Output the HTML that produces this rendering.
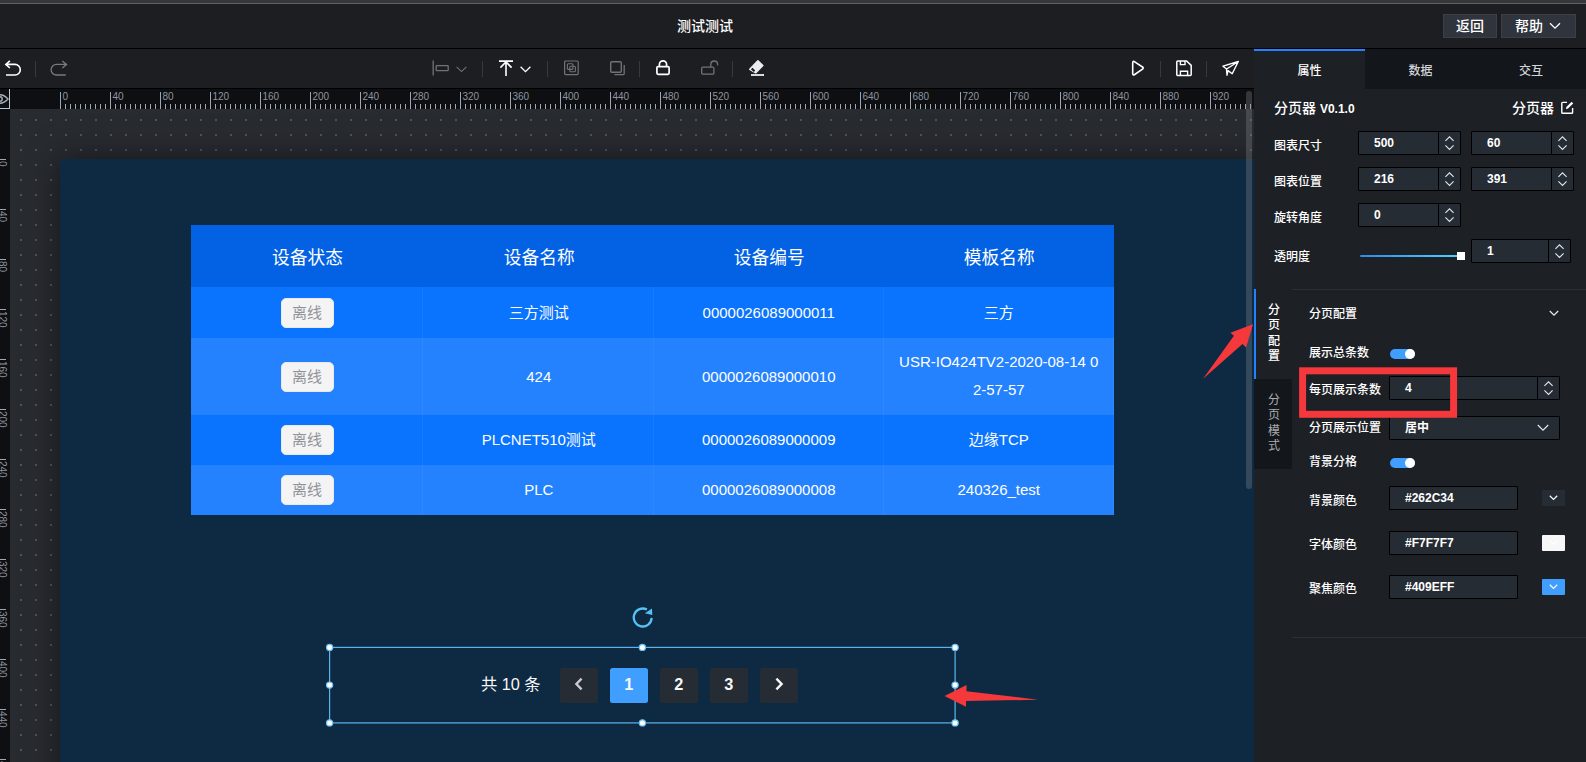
<!DOCTYPE html>
<html lang="zh-CN"><head><meta charset="utf-8"><title>测试测试</title>
<style>
*{box-sizing:border-box;margin:0;padding:0}
html,body{width:1586px;height:762px;overflow:hidden;background:#1e1f22}
body{position:relative;font-family:"Liberation Sans","Noto Sans CJK SC",sans-serif;font-size:12px;color:#fff}
.abs,body>div,body>svg{position:absolute}
i{font-style:normal}
/* top strip */
#strip{left:0;top:0;width:1586px;height:3px;background:#36373b}
#stripline{left:0;top:3px;width:1586px;height:1px;background:#616266}
/* header */
#header{left:0;top:4px;width:1586px;height:44px;background:#1d1e21}
#hline{left:0;top:48px;width:1586px;height:1px;background:#000}
#title{font-weight:500;position:absolute;left:605px;width:200px;top:11px;height:22px;line-height:22px;text-align:center;font-size:14px;color:#fff}
.hbtn{position:absolute;top:10px;height:24px;line-height:22px;border:1px solid #3b3f48;background:#2f343d;font-size:14px;color:#fff;text-align:center;font-weight:500}
/* toolbar */
#toolbar{left:0;top:49px;width:1254px;height:39px;background:#1d1e21}
#toolbar svg{position:absolute;overflow:visible}
.sep{position:absolute;top:12px;width:1px;height:16px;background:#38393e}
/* ruler */
#rulerT{left:0;top:88px;width:1254px;height:21px;background:#0e0f12;overflow:hidden;box-shadow:inset 0 1px 0 #000}
#rulerT .minor{position:absolute;left:60px;right:0;bottom:0;height:5px;background:repeating-linear-gradient(90deg,#a0a7b1 0,#a0a7b1 1px,transparent 1px,transparent 5px)}
.tk{position:absolute;top:4px;width:1px;height:17px;background:#a0a7b1}
.tl{position:absolute;top:3px;font-size:10px;line-height:12px;color:#8d949e}
#rulerL{left:0;top:109px;width:10px;height:653px;background:#0e0f12;overflow:hidden}
.lk{position:absolute;left:0;width:6px;height:1px;background:#a0a7b1}
.ll{position:absolute;left:8px;font-size:10px;line-height:12px;color:#8d949e;transform-origin:0 0;transform:rotate(90deg);white-space:nowrap}
#eye{left:0;top:89px;width:10px;height:20px;background:#0e0f12;border-right:1px solid #bcc5d0;border-bottom:1px solid #bcc5d0;overflow:hidden}
/* canvas */
#stage{left:10px;top:109px;width:1244px;height:653px;background-color:#282b30;overflow:hidden}
#dots{position:absolute;left:0;top:0;right:0;bottom:0;background-image:radial-gradient(circle at 1px 1px,#4b5559 0.9px,transparent 1.3px);background-size:15px 15px;background-position:10px 10px}
#screen{position:absolute;left:50px;top:50px;width:1300px;height:700px;background:#0e2a43;box-shadow:0 0 30px rgba(0,0,0,.5)}
/* right panel */
#panel{left:1254px;top:49px;width:332px;height:713px;background:#1d2025}
/* table (screen coords: page - (60,159)) */
#tbl{position:absolute;left:131px;top:66px;width:923px;height:290px;background:#0a74ff;font-size:15px;color:#fff}
#tbl .r{position:absolute;left:0;width:923px}
#tbl .c{position:absolute;top:0;bottom:0;width:231px;display:flex;align-items:center;justify-content:center;text-align:center;line-height:28px}
#tbl .r:not(.h) .c{border-right:1px solid rgba(255,255,255,.045)}
#tbl .c1{left:1px}#tbl .c2{left:232px;padding-left:1.5px}#tbl .c3{left:462px;padding-left:1.5px}#tbl .c4{left:692px;padding-left:1.5px}
#tbl .h{top:0;height:62px;background:#0262e3;font-size:17.7px}
#tbl .h .c{padding-top:3px}
.tag{display:inline-block;width:53px;height:30px;line-height:28px;border:1px solid #e9e9eb;border-radius:5px;background:#f4f4f5;color:#909399;font-size:15px;text-align:center}
/* pager */
#pager{position:absolute;left:270px;top:488px;width:626px;height:76px;font-size:16.25px;color:#f7f7f7}
#pager span{position:absolute;top:21px;height:35px;line-height:33.5px;white-space:nowrap}
#pager .pb{width:37.5px;border-radius:2.5px;background:#262c34;font-weight:bold;text-align:center}
#pager .on{background:#409eff}
/* panel internals (panel origin 1254,49) */
#panel .tabs{position:absolute;left:0;top:0;width:332px;height:40px;background:#13161b}
#panel .tab{position:absolute;top:0;height:40px;line-height:45px;text-align:center;font-size:12px;color:#d2d4d8;font-weight:500}
#panel .tab.on{background:#1d2025;border-top:2px solid #2681ff;line-height:41px;color:#fff;font-weight:500}
.lb{position:absolute;left:20px;height:16px;line-height:16px;font-size:12px;color:#fff;white-space:nowrap;font-weight:500;margin-top:1px}
.lb2{left:55px}
.inp{position:absolute;height:24px;border:1px solid #000;background:#262c34;border-radius:1px;font-size:12px;line-height:22px;color:#fff;padding-left:15px;font-weight:bold}
.inp .sp{position:absolute;right:0;top:0;bottom:0;width:22px;border-left:1px solid #000}
.inp .sp svg{position:absolute;left:5px;top:3px}
.hr{position:absolute;left:38px;right:0;height:1px;background:#2d2f34}
.vt{position:absolute;left:0;width:38px;font-size:12px;line-height:15.3px;text-align:center}
.vt i{display:block}
.sw{position:absolute;left:136px;width:25px;height:10px;border-radius:5px;background:#409eff}
.sw:after{content:"";position:absolute;right:0;top:0;width:10px;height:10px;border-radius:50%;background:#fff}
.cs{position:absolute;left:288px;width:23px;height:16px;border-radius:1px}
.cs svg{position:absolute;left:7px;top:5px}
#vscroll{left:1246px;top:91px;width:6px;height:398px;border-radius:3px;background:rgba(144,147,153,.3)}

</style></head>
<body>
<div id="strip"></div><div id="stripline"></div>
<div id="header">
  <div id="title">测试测试</div>
  <div class="hbtn" style="left:1443px;width:54px">返回</div>
  <div class="hbtn" style="left:1501px;width:75px;padding-right:19px">帮助<svg style="position:absolute;left:47px;top:7px" width="12" height="8" viewBox="0 0 12 8"><path d="M1 1.2 L6 6.2 L11 1.2" fill="none" stroke="#fff" stroke-width="1.3"/></svg></div>
</div>
<div id="hline"></div>

<div id="toolbar">
  <!-- undo -->
  <svg style="left:4px;top:11px" width="18" height="17" viewBox="0 0 18 17"><path d="M5.9 0.8 L1.8 4.4 L5.9 8 M2 4.4 H11 A5.3 5.3 0 0 1 11 15 H2" fill="none" stroke="#fff" stroke-width="1.6"/></svg>
  <i class="sep" style="left:35px"></i>
  <!-- redo -->
  <svg style="left:50px;top:11px" width="18" height="17" viewBox="0 0 18 17"><path d="M12.3 0.9 L16.6 4.4 L12.3 7.9 M16.4 4.4 H6.4 A5.3 5.3 0 0 0 6.4 15 H15.8" fill="none" stroke="#777a80" stroke-width="1.3"/></svg>
  <!-- align -->
  <svg style="left:432px;top:11px" width="18" height="16" viewBox="0 0 18 16"><path d="M1.2 0.5 V15.5" fill="none" stroke="#6f7379" stroke-width="1.3"/><rect x="4.2" y="5.6" width="12" height="5" rx="0.6" fill="none" stroke="#6f7379" stroke-width="1.3"/></svg>
  <svg style="left:456px;top:17px" width="11" height="7" viewBox="0 0 11 7"><path d="M0.6 0.8 L5.5 5.6 L10.4 0.8" fill="none" stroke="#6f7379" stroke-width="1.1"/></svg>
  <i class="sep" style="left:482px"></i>
  <!-- to top -->
  <svg style="left:499px;top:11px" width="14" height="16" viewBox="0 0 14 16"><path d="M0 1.1 H14 M7 16 V2.4 M1.4 7.6 L7 2 L12.6 7.6" fill="none" stroke="#fff" stroke-width="1.6"/></svg>
  <svg style="left:520px;top:17px" width="11" height="7" viewBox="0 0 11 7"><path d="M0.6 0.8 L5.5 5.6 L10.4 0.8" fill="none" stroke="#fff" stroke-width="1.3"/></svg>
  <i class="sep" style="left:547px"></i>
  <!-- group -->
  <svg style="left:564px;top:12px" width="15" height="15" viewBox="0 0.6 15 15"><rect x="0.6" y="0.6" width="13.6" height="13.6" rx="1" fill="none" stroke="#6f7379" stroke-width="1.2"/><rect x="3.4" y="3.4" width="5.6" height="5.6" rx="1" fill="none" stroke="#6f7379" stroke-width="1.1"/><rect x="5.8" y="5.8" width="5.6" height="5.6" rx="1" fill="none" stroke="#6f7379" stroke-width="1.1"/></svg>
  <!-- ungroup -->
  <svg style="left:610px;top:12px" width="16" height="15" viewBox="0 0 16 15"><rect x="0.7" y="0.7" width="10.6" height="10.6" rx="1.2" fill="none" stroke="#6f7379" stroke-width="1.4"/><path d="M14.2 4 V12.4 A1.2 1.2 0 0 1 13 13.6 H4.4" fill="none" stroke="#6f7379" stroke-width="1.3"/></svg>
  <i class="sep" style="left:639px"></i>
  <!-- lock -->
  <svg style="left:656px;top:11px" width="14" height="16" viewBox="0 0 14 16"><rect x="0.9" y="6.6" width="12.2" height="7.7" rx="1.2" fill="none" stroke="#fff" stroke-width="1.7"/><path d="M3.4 6.4 V4.4 A3.6 3.6 0 0 1 10.6 4.4 V6.4" fill="none" stroke="#fff" stroke-width="1.7"/></svg>
  <!-- unlock -->
  <svg style="left:701px;top:11px" width="18" height="16" viewBox="0 0 18 16"><rect x="0.7" y="7.2" width="12.2" height="7" rx="1.2" fill="none" stroke="#6f7379" stroke-width="1.3"/><path d="M9.8 7 V4.4 A3.4 3.4 0 0 1 16.6 4.4 V5.6" fill="none" stroke="#6f7379" stroke-width="1.3"/></svg>
  <i class="sep" style="left:732px"></i>
  <!-- eraser -->
  <svg style="left:748px;top:11px" width="17" height="17" viewBox="0 0 17 17"><path d="M9.9 0.9 L14.8 5.5 L7.8 12.8 L1.8 9.3 Z" fill="#ececee" stroke="#ececee" stroke-width="1.6" stroke-linejoin="round"/><path d="M2.9 9.2 L4.6 7.7 L7.2 10.4 L5.9 12.1 Z" fill="#1d1e21"/><path d="M3 15 H16" stroke="#ececee" stroke-width="1.8"/></svg>
  <!-- play -->
  <svg style="left:1131px;top:11px" width="14" height="17" viewBox="0 0 14 17"><path d="M1.7 2.9 Q1.7 0.6 3.7 1.8 L11.5 7 Q12.9 8.1 11.5 9.2 L3.7 14.5 Q1.7 15.7 1.7 13.4 Z" fill="none" stroke="#fff" stroke-width="1.6" stroke-linejoin="round"/></svg>
  <i class="sep" style="left:1160px"></i>
  <!-- save -->
  <svg style="left:1176px;top:11px" width="16" height="17" viewBox="0 0 16 17"><path d="M1.8 0.9 H10.6 L15.2 5.4 V14.6 A1 1 0 0 1 14.2 15.6 H1.8 A1 1 0 0 1 0.8 14.6 V1.9 A1 1 0 0 1 1.8 0.9 Z" fill="none" stroke="#fff" stroke-width="1.5"/><path d="M4.4 1 V4.6 H9 V1 M4.4 15.4 V11.2 H11.6 V15.4" fill="none" stroke="#fff" stroke-width="1.4"/></svg>
  <i class="sep" style="left:1206px"></i>
  <!-- send -->
  <svg style="left:1222px;top:11px" width="18" height="17" viewBox="0 0 18 17"><path d="M16.3 1.5 L1 6.2 L4.5 9 L5 15.2 L6 10.6 L10.2 13.7 Z M4.7 9 L16.3 1.5" fill="none" stroke="#fff" stroke-width="1.4" stroke-linejoin="round" stroke-linecap="round"/></svg>
</div>

<div id="stage">
  <div id="dots"></div>
  <div id="screen">
    <div id="tbl">
      <div class="r h"><div class="c c1">设备状态</div><div class="c c2">设备名称</div><div class="c c3">设备编号</div><div class="c c4">模板名称</div></div>
      <div class="r" style="top:62px;height:51px;background:#0a74ff"><div class="c c1"><span class="tag">离线</span></div><div class="c c2">三方测试</div><div class="c c3">0000026089000011</div><div class="c c4">三方</div></div>
      <div class="r" style="top:113px;height:77px;background:#2582ff"><div class="c c1"><span class="tag">离线</span></div><div class="c c2">424</div><div class="c c3">0000026089000010</div><div class="c c4" style="line-height:28px;padding-bottom:1px">USR-IO424TV2-2020-08-14 0<br>2-57-57</div></div>
      <div class="r" style="top:190px;height:50px;background:#0a74ff"><div class="c c1"><span class="tag">离线</span></div><div class="c c2">PLCNET510测试</div><div class="c c3">0000026089000009</div><div class="c c4">边缘TCP</div></div>
      <div class="r" style="top:240px;height:50px;background:#2582ff"><div class="c c1"><span class="tag">离线</span></div><div class="c c2">PLC</div><div class="c c3">0000026089000008</div><div class="c c4">240326_test</div></div>
    </div>
    <svg style="position:absolute;left:572px;top:448px" width="22" height="22" viewBox="0 0 22 22"><path d="M19.65 10.9 A8.95 8.95 0 1 1 14.9 2.6" fill="none" stroke="#57c1f6" stroke-width="2.3"/><path d="M12.9 6.2 L20 1.5 L20.3 7.9 Z" fill="#57c1f6"/></svg>
    <div id="pager">
      <span style="left:151px">共 10 条</span>
      <span class="pb" style="left:230px"><svg width="12" height="16" viewBox="0 0 12 16" style="vertical-align:-2px"><path d="M8.6 2.6 L3.4 8 L8.6 13.4" fill="none" stroke="#c9cbcf" stroke-width="2.4"/></svg></span>
      <span class="pb on" style="left:280px">1</span>
      <span class="pb" style="left:330px">2</span>
      <span class="pb" style="left:380px">3</span>
      <span class="pb" style="left:430px"><svg width="12" height="16" viewBox="0 0 12 16" style="vertical-align:-2px"><path d="M3.4 2.6 L8.6 8 L3.4 13.4" fill="none" stroke="#f7f7f7" stroke-width="2.4"/></svg></span>
    </div>
    <svg id="sel" style="position:absolute;left:0;top:0;overflow:visible" width="1000" height="600"><rect x="269.6" y="488.4" width="625.5" height="75.5" fill="none" stroke="#5cb2ee" stroke-width="1.2"/><g fill="#fff" stroke="#6cc0f6" stroke-width="1.2"><circle cx="269.6" cy="488.4" r="3.1"/><circle cx="582.4" cy="488.4" r="3.1"/><circle cx="895.1" cy="488.4" r="3.1"/><circle cx="269.6" cy="526.1" r="3.1"/><circle cx="895.1" cy="526.1" r="3.1"/><circle cx="269.6" cy="563.9" r="3.1"/><circle cx="582.4" cy="563.9" r="3.1"/><circle cx="895.1" cy="563.9" r="3.1"/></g></svg>
<!--SCREEN-->
  </div>
</div>
<div id="rulerT"><i class="minor"></i><i class="tk" style="left:60px"></i><span class="tl" style="left:62.5px">0</span><i class="tk" style="left:110px"></i><span class="tl" style="left:112.5px">40</span><i class="tk" style="left:160px"></i><span class="tl" style="left:162.5px">80</span><i class="tk" style="left:210px"></i><span class="tl" style="left:212.5px">120</span><i class="tk" style="left:260px"></i><span class="tl" style="left:262.5px">160</span><i class="tk" style="left:310px"></i><span class="tl" style="left:312.5px">200</span><i class="tk" style="left:360px"></i><span class="tl" style="left:362.5px">240</span><i class="tk" style="left:410px"></i><span class="tl" style="left:412.5px">280</span><i class="tk" style="left:460px"></i><span class="tl" style="left:462.5px">320</span><i class="tk" style="left:510px"></i><span class="tl" style="left:512.5px">360</span><i class="tk" style="left:560px"></i><span class="tl" style="left:562.5px">400</span><i class="tk" style="left:610px"></i><span class="tl" style="left:612.5px">440</span><i class="tk" style="left:660px"></i><span class="tl" style="left:662.5px">480</span><i class="tk" style="left:710px"></i><span class="tl" style="left:712.5px">520</span><i class="tk" style="left:760px"></i><span class="tl" style="left:762.5px">560</span><i class="tk" style="left:810px"></i><span class="tl" style="left:812.5px">600</span><i class="tk" style="left:860px"></i><span class="tl" style="left:862.5px">640</span><i class="tk" style="left:910px"></i><span class="tl" style="left:912.5px">680</span><i class="tk" style="left:960px"></i><span class="tl" style="left:962.5px">720</span><i class="tk" style="left:1010px"></i><span class="tl" style="left:1012.5px">760</span><i class="tk" style="left:1060px"></i><span class="tl" style="left:1062.5px">800</span><i class="tk" style="left:1110px"></i><span class="tl" style="left:1112.5px">840</span><i class="tk" style="left:1160px"></i><span class="tl" style="left:1162.5px">880</span><i class="tk" style="left:1210px"></i><span class="tl" style="left:1212.5px">920</span></div>
<div id="rulerL"><i class="lk" style="top:50px"></i><span class="ll" style="top:51.5px">0</span><i class="lk" style="top:100px"></i><span class="ll" style="top:101.5px">40</span><i class="lk" style="top:150px"></i><span class="ll" style="top:151.5px">80</span><i class="lk" style="top:200px"></i><span class="ll" style="top:201.5px">120</span><i class="lk" style="top:250px"></i><span class="ll" style="top:251.5px">160</span><i class="lk" style="top:300px"></i><span class="ll" style="top:301.5px">200</span><i class="lk" style="top:350px"></i><span class="ll" style="top:351.5px">240</span><i class="lk" style="top:400px"></i><span class="ll" style="top:401.5px">280</span><i class="lk" style="top:450px"></i><span class="ll" style="top:451.5px">320</span><i class="lk" style="top:500px"></i><span class="ll" style="top:501.5px">360</span><i class="lk" style="top:550px"></i><span class="ll" style="top:551.5px">400</span><i class="lk" style="top:600px"></i><span class="ll" style="top:601.5px">440</span><i class="lk" style="top:650px"></i><span class="ll" style="top:651.5px">480</span></div>
<div id="eye"><svg style="position:absolute;left:-9px;top:4px" width="18" height="12" viewBox="0 0 18 12"><path d="M1 6 Q9 -2.5 17 6 Q9 14.5 1 6 Z" fill="none" stroke="#a9b1bc" stroke-width="1.4"/><circle cx="9" cy="6" r="2.2" fill="none" stroke="#a9b1bc" stroke-width="1.4"/></svg></div>

<div id="vscroll"></div>
<div id="panel">
  <div class="tabs"><div class="tab on" style="left:0;width:111px">属性</div><div class="tab" style="left:111px;width:111px">数据</div><div class="tab" style="left:222px;width:110px">交互</div></div>
  <div class="lb" style="top:49px;font-size:14px;height:18px;line-height:18px;font-weight:500">分页器 <span style="font-size:12px;font-weight:bold">V0.1.0</span></div>
  <div class="lb" style="left:258px;top:49px;font-size:14px;height:18px;line-height:18px;font-weight:500">分页器</div>
  <svg style="position:absolute;left:307px;top:52px" width="13" height="13" viewBox="0 0 13 13"><path d="M6 1.4 H1.6 A0.8 0.8 0 0 0 0.8 2.2 V11.4 A0.8 0.8 0 0 0 1.6 12.2 H10.8 A0.8 0.8 0 0 0 11.6 11.4 V7" fill="none" stroke="#fff" stroke-width="1.4"/><path d="M5 8.2 L5.4 6 L10.6 0.8 L12.2 2.4 L7 7.6 Z" fill="#fff"/></svg>

  <div class="lb" style="top:88px">图表尺寸</div><div class="inp" style="left:104px;top:82px;width:103px">500<i class="sp"><svg width="11" height="16" viewBox="0 0 11 16"><path d="M1.4 5.8 L5.5 1.8 L9.6 5.8 M1.4 10.4 L5.5 14.4 L9.6 10.4" fill="none" stroke="#e6e7e9" stroke-width="1.1"/></svg></i></div><div class="inp" style="left:217px;top:82px;width:103px">60<i class="sp"><svg width="11" height="16" viewBox="0 0 11 16"><path d="M1.4 5.8 L5.5 1.8 L9.6 5.8 M1.4 10.4 L5.5 14.4 L9.6 10.4" fill="none" stroke="#e6e7e9" stroke-width="1.1"/></svg></i></div>
  <div class="lb" style="top:124px">图表位置</div><div class="inp" style="left:104px;top:118px;width:103px">216<i class="sp"><svg width="11" height="16" viewBox="0 0 11 16"><path d="M1.4 5.8 L5.5 1.8 L9.6 5.8 M1.4 10.4 L5.5 14.4 L9.6 10.4" fill="none" stroke="#e6e7e9" stroke-width="1.1"/></svg></i></div><div class="inp" style="left:217px;top:118px;width:103px">391<i class="sp"><svg width="11" height="16" viewBox="0 0 11 16"><path d="M1.4 5.8 L5.5 1.8 L9.6 5.8 M1.4 10.4 L5.5 14.4 L9.6 10.4" fill="none" stroke="#e6e7e9" stroke-width="1.1"/></svg></i></div>
  <div class="lb" style="top:160px">旋转角度</div><div class="inp" style="left:104px;top:154px;width:103px">0<i class="sp"><svg width="11" height="16" viewBox="0 0 11 16"><path d="M1.4 5.8 L5.5 1.8 L9.6 5.8 M1.4 10.4 L5.5 14.4 L9.6 10.4" fill="none" stroke="#e6e7e9" stroke-width="1.1"/></svg></i></div>
  <div class="lb" style="top:199px">透明度</div>
  <div style="position:absolute;left:106px;top:206px;width:99px;height:2px;background:linear-gradient(90deg,#2a8cf0,#4fd0ff);border-radius:1px"></div>
  <div style="position:absolute;left:203px;top:203px;width:8px;height:8px;background:#fff"></div>
  <div class="inp" style="left:217px;top:190px;width:100px">1<i class="sp"><svg width="11" height="16" viewBox="0 0 11 16"><path d="M1.4 5.8 L5.5 1.8 L9.6 5.8 M1.4 10.4 L5.5 14.4 L9.6 10.4" fill="none" stroke="#e6e7e9" stroke-width="1.1"/></svg></i></div>

  <div class="hr" style="top:240px"></div>
  <div style="position:absolute;left:0;top:240px;width:38px;height:90px;border-left:2px solid #2681ff"></div>
  <div style="position:absolute;left:0;top:330px;width:38px;height:90px;background:#13161b"></div>
  <div class="vt" style="top:254px;left:1px;color:#fff;font-weight:500"><i>分</i><i>页</i><i>配</i><i>置</i></div>
  <div class="vt" style="top:344px;left:1px;color:#a9acb1"><i>分</i><i>页</i><i>模</i><i>式</i></div>

  <div class="lb lb2" style="top:256px">分页配置</div>
  <svg style="position:absolute;left:295px;top:261px" width="10" height="7" viewBox="0 0 10 7"><path d="M0.8 1 L5 5.2 L9.2 1" fill="none" stroke="#e6e7e9" stroke-width="1.3"/></svg>
  <div class="lb lb2" style="top:295px">展示总条数</div><div class="sw" style="top:300px"></div>
  <div class="lb lb2" style="top:332px">每页展示条数</div><div class="inp" style="left:135px;top:327px;width:171px">4<i class="sp"><svg width="11" height="16" viewBox="0 0 11 16"><path d="M1.4 5.8 L5.5 1.8 L9.6 5.8 M1.4 10.4 L5.5 14.4 L9.6 10.4" fill="none" stroke="#e6e7e9" stroke-width="1.1"/></svg></i></div>
  <div class="lb lb2" style="top:370px">分页展示位置</div><div class="inp" style="left:135px;top:367px;width:171px">居中<svg style="position:absolute;right:10px;top:7px" width="12" height="8" viewBox="0 0 12 8"><path d="M0.8 1 L6 6.2 L11.2 1" fill="none" stroke="#e6e7e9" stroke-width="1.2"/></svg></div>
  <div class="lb lb2" style="top:404px">背景分格</div><div class="sw" style="top:409px"></div>
  <div class="lb lb2" style="top:443px">背景颜色</div><div class="inp" style="left:135px;top:437px;width:129px">#262C34</div><div class="cs" style="top:441px;background:#262c34"><svg width="9" height="6" viewBox="0 0 9 6"><path d="M0.8 0.8 L4.5 4.4 L8.2 0.8" fill="none" stroke="#fff" stroke-width="1.2"/></svg></div>
  <div class="lb lb2" style="top:487px">字体颜色</div><div class="inp" style="left:135px;top:482px;width:129px">#F7F7F7</div><div class="cs" style="top:486px;background:#f7f7f7"><svg width="9" height="6" viewBox="0 0 9 6"><path d="M0.8 0.8 L4.5 4.4 L8.2 0.8" fill="none" stroke="#fff" stroke-width="1.2"/></svg></div>
  <div class="lb lb2" style="top:531px">聚焦颜色</div><div class="inp" style="left:135px;top:526px;width:129px">#409EFF</div><div class="cs" style="top:530px;background:#409eff"><svg width="9" height="6" viewBox="0 0 9 6"><path d="M0.8 0.8 L4.5 4.4 L8.2 0.8" fill="none" stroke="#fff" stroke-width="1.2"/></svg></div>
  <div class="hr" style="top:588px"></div>
<!--PANEL-->
</div>
<svg id="annot" style="left:0;top:0;pointer-events:none" width="1586" height="762" viewBox="0 0 1586 762">
  <rect x="1302.6" y="370.8" width="151" height="43.5" fill="none" stroke="#f4383b" stroke-width="7"/>
  <path d="M1253 324.3 L1230.4 332.8 L1233.9 335.7 L1203.1 378.7 L1242.5 343.9 L1246.1 347.5 Z" fill="#f4383b"/>
  <path d="M944.5 696 L966.5 685 L966.5 691.3 L1038 699.7 L966 701.1 L966 706.8 Z" fill="#f4383b"/>
</svg>


</body></html>
